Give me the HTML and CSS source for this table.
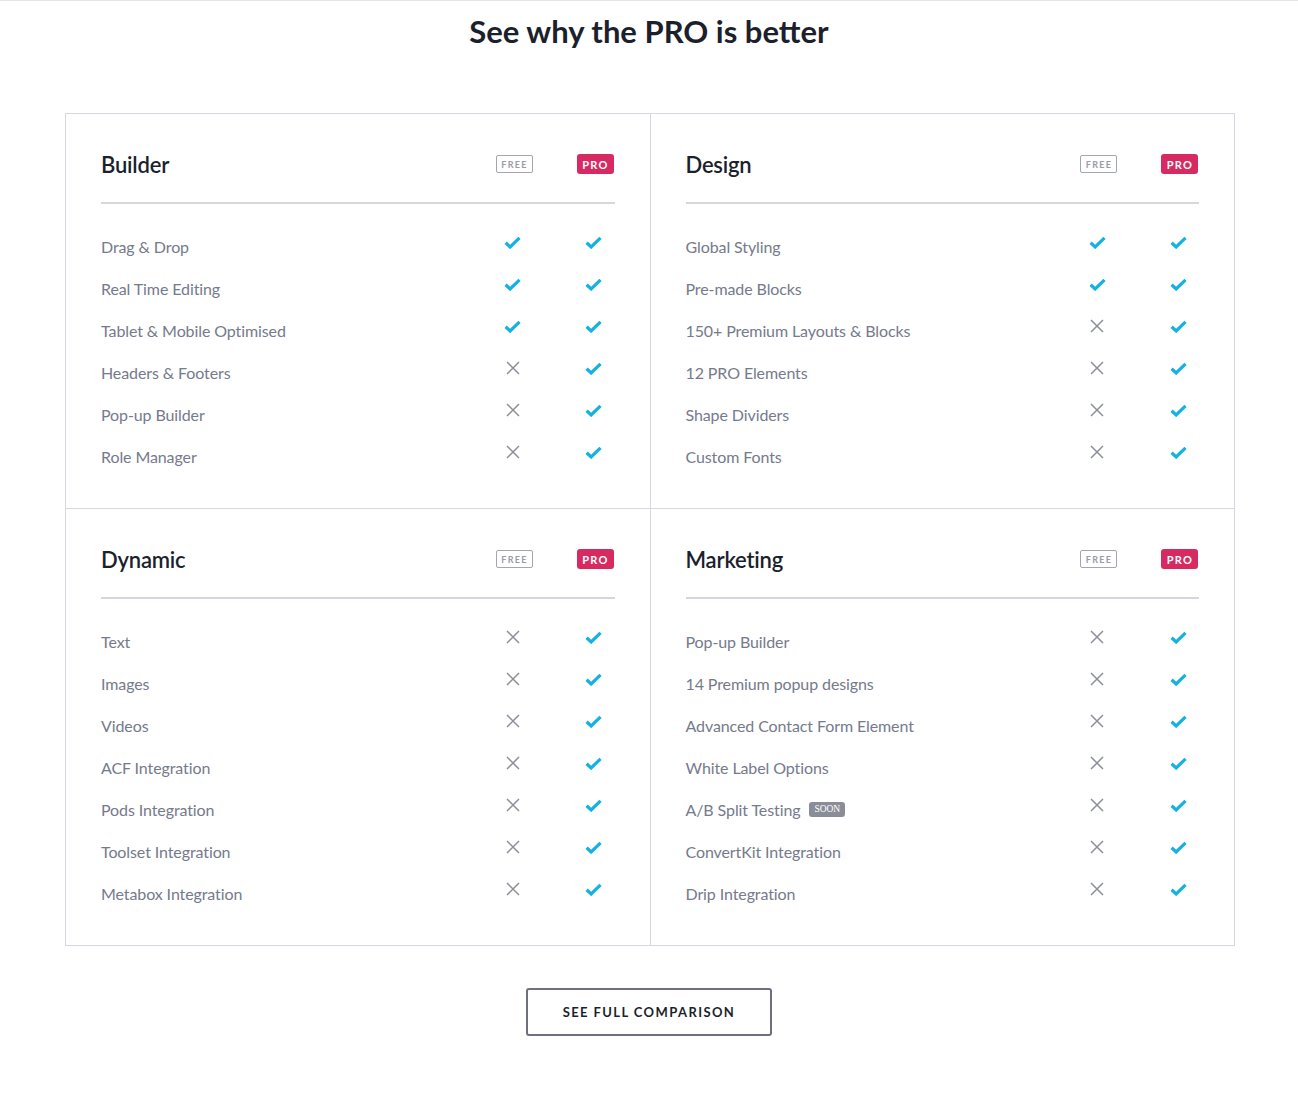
FILE: index.html
```html
<!DOCTYPE html>
<html>
<head>
<meta charset="utf-8">
<link rel="stylesheet" href="styles.css">
</head>
<body>
<svg width="0" height="0" class="defs">
  <symbol id="chk" viewBox="0 0 16 12"><path d="M1.5 6.2 L5.8 10.2 L14.6 1.6" fill="none" stroke="#13b2e2" stroke-width="3" stroke-linejoin="miter"/></symbol>
  <symbol id="crs" viewBox="0 0 14 14"><path d="M1 1 L13 13 M13 1 L1 13" fill="none" stroke="#8c8f9b" stroke-width="1.5"/></symbol>
</svg>
<section class="page">
  <h1 class="title">See why the PRO is better</h1>
  <div class="grid">
    <div class="card">
      <div class="card-head">
        <h2 class="card-title">Builder</h2>
        <div class="col"><span class="badge-free">FREE</span></div>
        <div class="col"><span class="badge-pro">PRO</span></div>
      </div>
      <ul class="rows">
        <li class="row"><span class="label">Drag &amp; Drop</span><span class="col"><svg class="ic-chk"><use href="#chk"/></svg></span><span class="col"><svg class="ic-chk"><use href="#chk"/></svg></span></li>
        <li class="row"><span class="label">Real Time Editing</span><span class="col"><svg class="ic-chk"><use href="#chk"/></svg></span><span class="col"><svg class="ic-chk"><use href="#chk"/></svg></span></li>
        <li class="row"><span class="label">Tablet &amp; Mobile Optimised</span><span class="col"><svg class="ic-chk"><use href="#chk"/></svg></span><span class="col"><svg class="ic-chk"><use href="#chk"/></svg></span></li>
        <li class="row"><span class="label">Headers &amp; Footers</span><span class="col"><svg class="ic-crs"><use href="#crs"/></svg></span><span class="col"><svg class="ic-chk"><use href="#chk"/></svg></span></li>
        <li class="row"><span class="label">Pop-up Builder</span><span class="col"><svg class="ic-crs"><use href="#crs"/></svg></span><span class="col"><svg class="ic-chk"><use href="#chk"/></svg></span></li>
        <li class="row"><span class="label">Role Manager</span><span class="col"><svg class="ic-crs"><use href="#crs"/></svg></span><span class="col"><svg class="ic-chk"><use href="#chk"/></svg></span></li>
      </ul>
    </div>
    <div class="card">
      <div class="card-head">
        <h2 class="card-title">Design</h2>
        <div class="col"><span class="badge-free">FREE</span></div>
        <div class="col"><span class="badge-pro">PRO</span></div>
      </div>
      <ul class="rows">
        <li class="row"><span class="label">Global Styling</span><span class="col"><svg class="ic-chk"><use href="#chk"/></svg></span><span class="col"><svg class="ic-chk"><use href="#chk"/></svg></span></li>
        <li class="row"><span class="label">Pre-made Blocks</span><span class="col"><svg class="ic-chk"><use href="#chk"/></svg></span><span class="col"><svg class="ic-chk"><use href="#chk"/></svg></span></li>
        <li class="row"><span class="label">150+ Premium Layouts &amp; Blocks</span><span class="col"><svg class="ic-crs"><use href="#crs"/></svg></span><span class="col"><svg class="ic-chk"><use href="#chk"/></svg></span></li>
        <li class="row"><span class="label">12 PRO Elements</span><span class="col"><svg class="ic-crs"><use href="#crs"/></svg></span><span class="col"><svg class="ic-chk"><use href="#chk"/></svg></span></li>
        <li class="row"><span class="label">Shape Dividers</span><span class="col"><svg class="ic-crs"><use href="#crs"/></svg></span><span class="col"><svg class="ic-chk"><use href="#chk"/></svg></span></li>
        <li class="row"><span class="label">Custom Fonts</span><span class="col"><svg class="ic-crs"><use href="#crs"/></svg></span><span class="col"><svg class="ic-chk"><use href="#chk"/></svg></span></li>
      </ul>
    </div>
    <div class="card">
      <div class="card-head">
        <h2 class="card-title">Dynamic</h2>
        <div class="col"><span class="badge-free">FREE</span></div>
        <div class="col"><span class="badge-pro">PRO</span></div>
      </div>
      <ul class="rows">
        <li class="row"><span class="label">Text</span><span class="col"><svg class="ic-crs"><use href="#crs"/></svg></span><span class="col"><svg class="ic-chk"><use href="#chk"/></svg></span></li>
        <li class="row"><span class="label">Images</span><span class="col"><svg class="ic-crs"><use href="#crs"/></svg></span><span class="col"><svg class="ic-chk"><use href="#chk"/></svg></span></li>
        <li class="row"><span class="label">Videos</span><span class="col"><svg class="ic-crs"><use href="#crs"/></svg></span><span class="col"><svg class="ic-chk"><use href="#chk"/></svg></span></li>
        <li class="row"><span class="label">ACF Integration</span><span class="col"><svg class="ic-crs"><use href="#crs"/></svg></span><span class="col"><svg class="ic-chk"><use href="#chk"/></svg></span></li>
        <li class="row"><span class="label">Pods Integration</span><span class="col"><svg class="ic-crs"><use href="#crs"/></svg></span><span class="col"><svg class="ic-chk"><use href="#chk"/></svg></span></li>
        <li class="row"><span class="label">Toolset Integration</span><span class="col"><svg class="ic-crs"><use href="#crs"/></svg></span><span class="col"><svg class="ic-chk"><use href="#chk"/></svg></span></li>
        <li class="row"><span class="label">Metabox Integration</span><span class="col"><svg class="ic-crs"><use href="#crs"/></svg></span><span class="col"><svg class="ic-chk"><use href="#chk"/></svg></span></li>
      </ul>
    </div>
    <div class="card">
      <div class="card-head">
        <h2 class="card-title">Marketing</h2>
        <div class="col"><span class="badge-free">FREE</span></div>
        <div class="col"><span class="badge-pro">PRO</span></div>
      </div>
      <ul class="rows">
        <li class="row"><span class="label">Pop-up Builder</span><span class="col"><svg class="ic-crs"><use href="#crs"/></svg></span><span class="col"><svg class="ic-chk"><use href="#chk"/></svg></span></li>
        <li class="row"><span class="label">14 Premium popup designs</span><span class="col"><svg class="ic-crs"><use href="#crs"/></svg></span><span class="col"><svg class="ic-chk"><use href="#chk"/></svg></span></li>
        <li class="row"><span class="label">Advanced Contact Form Element</span><span class="col"><svg class="ic-crs"><use href="#crs"/></svg></span><span class="col"><svg class="ic-chk"><use href="#chk"/></svg></span></li>
        <li class="row"><span class="label">White Label Options</span><span class="col"><svg class="ic-crs"><use href="#crs"/></svg></span><span class="col"><svg class="ic-chk"><use href="#chk"/></svg></span></li>
        <li class="row"><span class="label">A/B Split Testing <span class="soon">SOON</span></span><span class="col"><svg class="ic-crs"><use href="#crs"/></svg></span><span class="col"><svg class="ic-chk"><use href="#chk"/></svg></span></li>
        <li class="row"><span class="label">ConvertKit Integration</span><span class="col"><svg class="ic-crs"><use href="#crs"/></svg></span><span class="col"><svg class="ic-chk"><use href="#chk"/></svg></span></li>
        <li class="row"><span class="label">Drip Integration</span><span class="col"><svg class="ic-crs"><use href="#crs"/></svg></span><span class="col"><svg class="ic-chk"><use href="#chk"/></svg></span></li>
      </ul>
    </div>
  </div>
  <div class="cta-wrap"><a class="cta" href="#">SEE FULL COMPARISON</a></div>
</section>
</body>
</html>
```

FILE: styles.css
```css
html, body {
  margin: 0;
  padding: 0;
  background: #ffffff;
}
body {
  font-family: "Lato", "Liberation Sans", sans-serif;
  color: #1c1f2c;
}
.defs {
  position: absolute;
  width: 0;
  height: 0;
  overflow: hidden;
}
.page {
  border-top: 1px solid #e4e4e4;
  padding-bottom: 60px;
}
.title {
  margin: 10px 0 0;
  text-align: center;
  font-size: 31px;
  line-height: 40px;
  font-weight: 700;
  color: #1c1f2c;
}
.grid {
  width: 1170px;
  box-sizing: border-box;
  margin: 62px 63px 0 65px;
  display: grid;
  grid-template-columns: 1fr 1fr;
  border-top: 1px solid #d6d8e0;
  border-left: 1px solid #d6d8e0;
}
.card {
  border-right: 1px solid #d6d8e0;
  border-bottom: 1px solid #d6d8e0;
  padding: 33px 35px 31px;
}
.card-head {
  display: flex;
  align-items: center;
  gap: 44px;
  height: 34px;
  padding-bottom: 21px;
  padding-right: 1px;
  border-bottom: 2px solid #d4d7df;
}
.card-title {
  flex: 1;
  margin: 0;
  font-size: 22px;
  font-weight: 600;
  color: #1c1f2c;
  letter-spacing: -0.2px;
}
.col {
  width: 37px;
  display: flex;
  justify-content: center;
  align-items: center;
}
.badge-free {
  box-sizing: border-box;
  width: 37px;
  height: 18px;
  border: 1px solid #a3a6b1;
  border-radius: 2px;
  color: #999ca8;
  font-size: 9px;
  font-weight: 700;
  letter-spacing: 1.3px;
  display: flex;
  align-items: center;
  justify-content: center;
  padding-left: 1px;
}
.badge-pro {
  box-sizing: border-box;
  width: 37px;
  height: 20px;
  border-radius: 3px;
  background: #d72a61;
  color: #ffffff;
  font-size: 11px;
  font-weight: 700;
  letter-spacing: 1.2px;
  display: flex;
  align-items: center;
  justify-content: center;
  padding-left: 1px;
}
.rows {
  list-style: none;
  margin: 21px 0 0;
  padding: 0 1px 0 0;
}
.row {
  display: flex;
  align-items: center;
  gap: 44px;
  height: 42px;
}
.row .col {
  margin-bottom: 8px;
}
.label {
  flex: 1;
  font-size: 16px;
  letter-spacing: -0.1px;
  color: #757a8c;
  display: flex;
  align-items: center;
}
.soon {
  margin-left: 9px;
  background: #8a8d97;
  color: #ffffff;
  font-family: "Liberation Serif", "DejaVu Serif", serif;
  font-size: 9.5px;
  line-height: 15px;
  padding: 0 5px;
  border-radius: 3px;
}
.ic-chk {
  width: 17px;
  height: 13px;
  display: block;
  margin-right: 3px;
}
.ic-crs {
  width: 14px;
  height: 14px;
  display: block;
  margin-right: 3px;
}
.cta-wrap {
  display: flex;
  justify-content: center;
  margin-top: 42px;
}
.cta {
  box-sizing: border-box;
  width: 246px;
  height: 48px;
  border: 2px solid #6e717d;
  border-radius: 3px;
  display: flex;
  align-items: center;
  justify-content: center;
  text-decoration: none;
  color: #1c1f2c;
  font-size: 13px;
  font-weight: 700;
  letter-spacing: 1.4px;
}
```
